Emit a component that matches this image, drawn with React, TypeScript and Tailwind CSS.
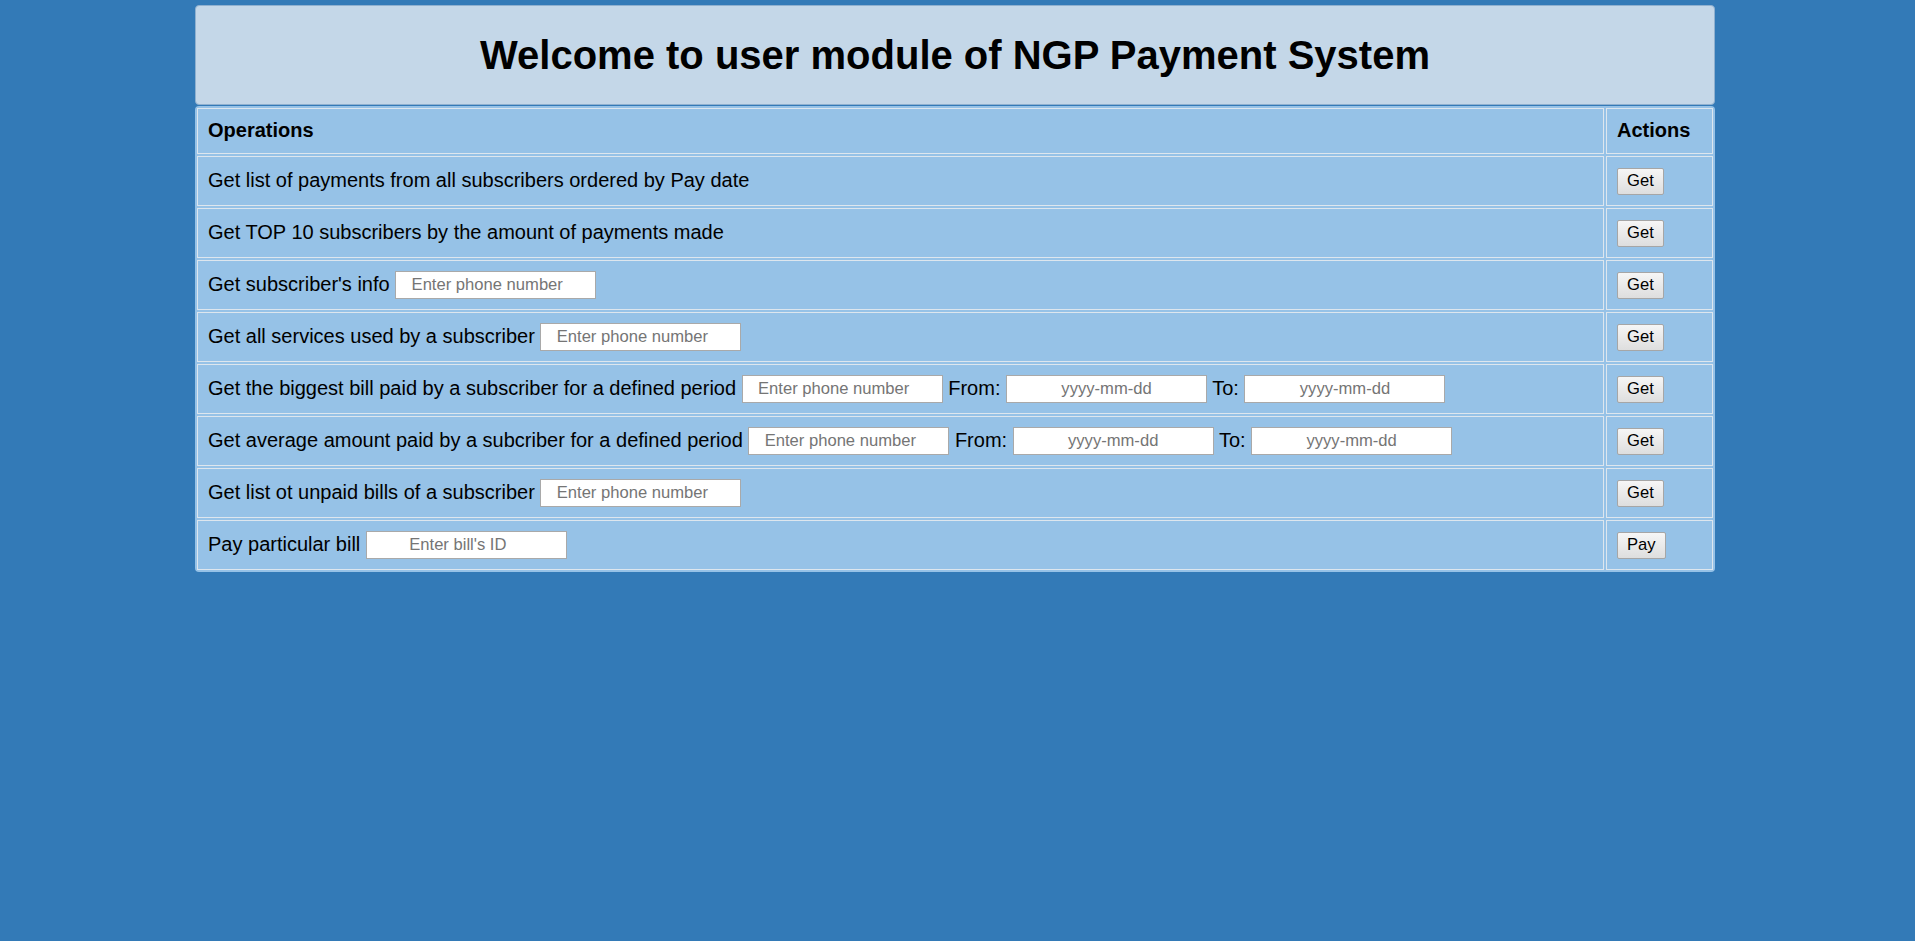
import React from "react";

function Field({ ph, offset }: { ph: string; offset?: boolean }) {
  return (
    <input
      type="text"
      placeholder={ph}
      className={
        offset
          ? "w-[201px] h-[28px] border border-[#a9a9a9] bg-white text-center text-[16.6px] text-black placeholder:text-[#757575] align-middle outline-none pl-[2px] pr-[19px]"
          : "w-[201px] h-[28px] border border-[#a9a9a9] bg-white text-center text-[16.6px] text-black placeholder:text-[#757575] align-middle outline-none px-[2px]"
      }
      style={{ fontFamily: '"Liberation Sans", Arial, sans-serif' }}
    />
  );
}

function Btn({ label }: { label: string }) {
  return (
    <button
      type="button"
      className="h-[27px] px-[9px] border border-[#a6a6a6] rounded-[2px] bg-gradient-to-b from-[#f6f6f6] to-[#dedede] text-[16.6px] text-black leading-none align-middle"
    >
      {label}
    </button>
  );
}

type Row = { label: string; inputs?: "phone" | "period" | "bill"; action: string };

const rows: Row[] = [
  { label: "Get list of payments from all subscribers ordered by Pay date", action: "Get" },
  { label: "Get TOP 10 subscribers by the amount of payments made", action: "Get" },
  { label: "Get subscriber's info", inputs: "phone", action: "Get" },
  { label: "Get all services used by a subscriber", inputs: "phone", action: "Get" },
  { label: "Get the biggest bill paid by a subscriber for a defined period", inputs: "period", action: "Get" },
  { label: "Get average amount paid by a subcriber for a defined period", inputs: "period", action: "Get" },
  { label: "Get list ot unpaid bills of a subscriber", inputs: "phone", action: "Get" },
  { label: "Pay particular bill", inputs: "bill", action: "Pay" },
];

export default function App() {
  return (
    <div
      className="min-h-[941px] w-full bg-[#337ab7] pt-[5px]"
      style={{ fontFamily: '"Liberation Sans", Arial, sans-serif' }}
    >
      <div className="ml-[195px] w-[1520px]">
        <div className="h-[100px] rounded-[4px] border border-[#8fb0cf] bg-[#c4d7e8] flex items-center justify-center">
          <h1 className="text-[40px] font-bold text-black leading-none">Welcome to user module of NGP Payment System</h1>
        </div>
        <table className="mt-[1px] w-[1520px] border-separate border-spacing-[2px] rounded-[4px] bg-[#96c2e7] text-[20px] text-black">
          <thead>
            <tr>
              <th className="h-[46px] border border-[#dde6ee] px-[10px] pt-0 pb-[2px] text-left font-bold align-middle">Operations</th>
              <th className="h-[46px] w-[107px] border border-[#dde6ee] px-[10px] pt-0 pb-[2px] text-left font-bold align-middle">Actions</th>
            </tr>
          </thead>
          <tbody>
            {rows.map((r, i) => (
              <tr key={i}>
                <td className="h-[50px] border border-[#dde6ee] px-[10px] pt-0 pb-[2px] align-middle whitespace-nowrap">
                  {r.label}
                  {r.inputs === "phone" && (
                    <>
                      {" "}
                      <Field ph="Enter phone number" offset />
                    </>
                  )}
                  {r.inputs === "bill" && (
                    <>
                      {" "}
                      <Field ph="Enter bill's ID" offset />
                    </>
                  )}
                  {r.inputs === "period" && (
                    <>
                      {" "}
                      <Field ph="Enter phone number" offset /> From: <Field ph="yyyy-mm-dd" /> To: <Field ph="yyyy-mm-dd" />
                    </>
                  )}
                </td>
                <td className="h-[50px] w-[107px] border border-[#dde6ee] px-[10px] pt-0 pb-[2px] align-middle">
                  <Btn label={r.action} />
                </td>
              </tr>
            ))}
          </tbody>
        </table>
      </div>
    </div>
  );
}
